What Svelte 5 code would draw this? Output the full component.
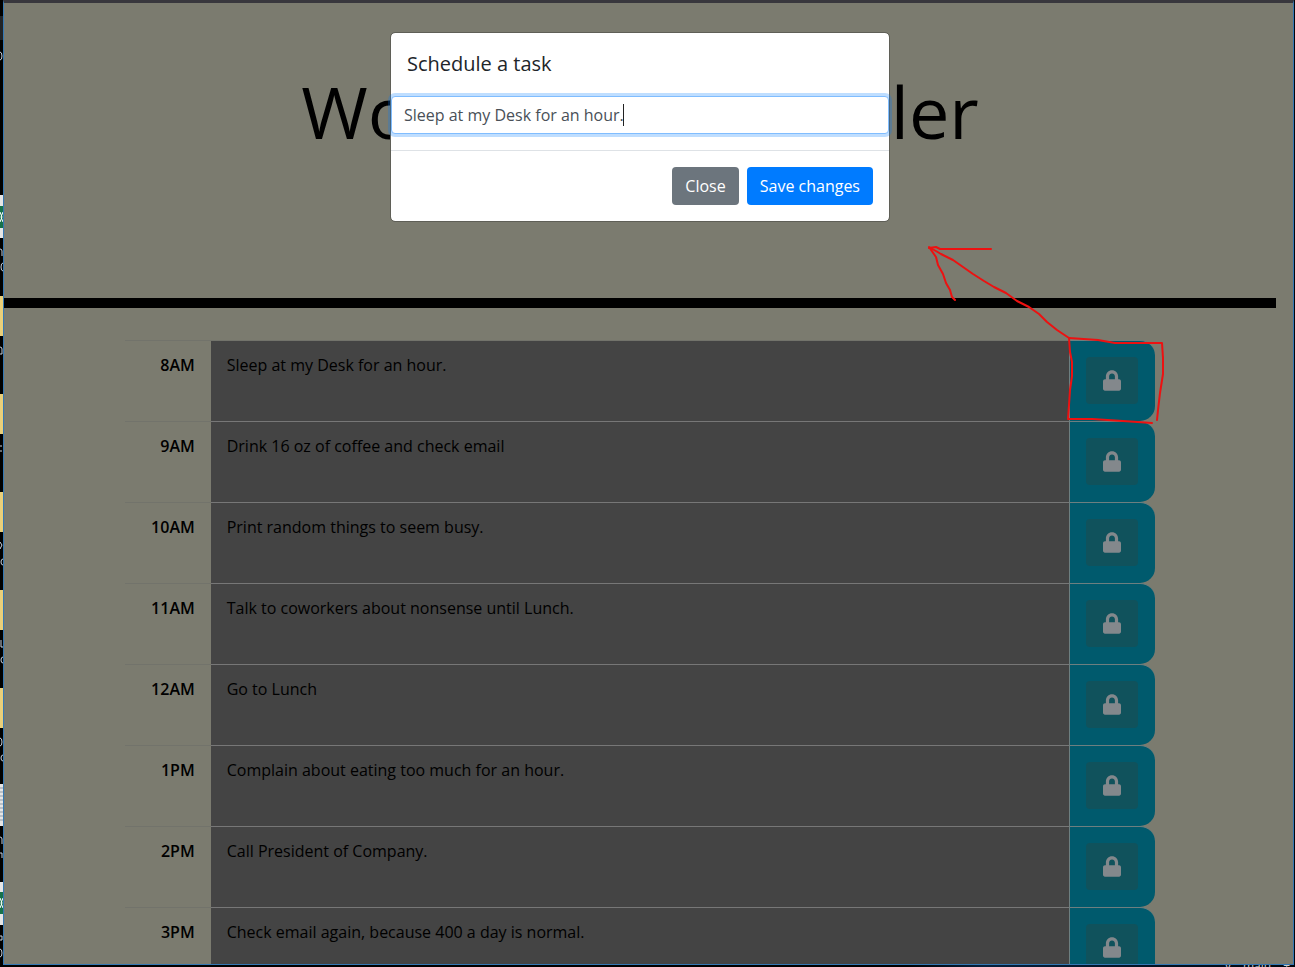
<script>
  const tasks = [
    { hour: '8AM', text: 'Sleep at my Desk for an hour.' },
    { hour: '9AM', text: 'Drink 16 oz of coffee and check email' },
    { hour: '10AM', text: 'Print random things to seem busy.' },
    { hour: '11AM', text: 'Talk to coworkers about nonsense until Lunch.' },
    { hour: '12AM', text: 'Go to Lunch' },
    { hour: '1PM', text: 'Complain about eating too much for an hour.' },
    { hour: '2PM', text: 'Call President of Company.' },
    { hour: '3PM', text: 'Check email again, because 400 a day is normal.' }
  ];

  let draft = $state('Sleep at my Desk for an hour.');
</script>

<div class="desktop">
  <svg class="icons-left" width="3" height="967" aria-hidden="true">
    <rect y="16" width="3" height="24" fill="#222427" />
    <g fill="#e6e6e6">
      <rect y="195" width="3" height="43" />
      <rect y="784" width="3" height="42" />
      <rect y="882" width="3" height="43" />
    </g>
    <g fill="#17724a">
      <rect y="206" width="3" height="22" />
      <rect y="892" width="3" height="22" />
    </g>
    <path d="M0 212l2 5-2 5M3 212l-2 5 2 5M0 898l2 5-2 5M3 898l-2 5 2 5" fill="none" stroke="#fff" />
    <g fill="#e9cf7a">
      <rect y="296" width="3" height="40" />
      <rect y="394" width="3" height="40" />
      <rect y="492" width="3" height="40" />
      <rect y="590" width="3" height="40" />
      <rect y="688" width="3" height="40" />
    </g>
    <path d="M0 788h3M0 792h3M0 796h3M0 800h3M0 804h3M0 808h3M0 812h3M0 816h3M0 820h3" stroke="#8e99a6" />
    <path
      d="M0 52q2 0 2 4t-2 4M0 249q2 0 2 2v5M3 263q-2 0-2 4t2 4M0 347q2 0 2 2v5h-2M0 446h2M0 451h2M0 542l2 3-2 4M3 559q-2 0-2 3t2 3M1 640v7h2M3 657q-2 0-2 3t2 3M0 738q2 0 2 4t-2 4M3 755q-2 0-2 3t2 3M0 837q2 0 2 2v5M0 853h2v5M0 936h2v4h-2M0 949q2 0 2 4t-2 4"
      fill="none" stroke="#c9d3df" />
  </svg>

  <div class="window">
    <main class="page">
      <header class="banner">
        <h1>Work Day Scheduler</h1>
      </header>

      <div class="planner">
        {#each tasks as task}
          <div class="row">
            <div class="hour">{task.hour}</div>
            <div class="task">{task.text}</div>
            <div class="action">
              <button class="lock" aria-label={'Edit ' + task.hour}>
                <svg width="18" height="21" viewBox="0 0 448 512" aria-hidden="true">
                  <path fill="currentColor" d="M400 224h-24v-72C376 68.2 307.8 0 224 0S72 68.2 72 152v72H48c-26.500 0-48 21.500-48 48v192c0 26.500 21.500 48 48 48h352c26.500 0 48-21.500 48-48V272c0-26.500-21.500-48-48-48zm-104 0H152v-72c0-39.700 32.300-72 72-72s72 32.300 72 72v72z" />
                </svg>
              </button>
            </div>
          </div>
        {/each}
      </div>

      <div class="modal" role="dialog" aria-labelledby="modal-title">
        <h2 id="modal-title">Schedule a task</h2>
        <div class="field">
          <input type="text" aria-label="Task" bind:value={draft} />
          <span class="caret"></span>
        </div>
        <footer>
          <button class="btn secondary">Close</button>
          <button class="btn primary">Save changes</button>
        </footer>
      </div>

      <svg class="arrow" width="240" height="184" viewBox="925 242 240 184" aria-hidden="true">
        <g fill="none" stroke="#ed1111" stroke-width="2" stroke-linejoin="round" stroke-linecap="round">
          <path d="M1069 338L1057 330 1047 322 1039 314 1029 307 1017 301 1006 293 994 287 984 281 973 274 963 267 953 260 941 254 929 247 936 257 938 265 943 274 946 283 950 290 952 297 955 300" />
          <path d="M929 248L936 247 940 249H991" />
          <path d="M1069 338L1098 340 1115 343 1162 343 1163 358 1163 374 1160 393 1158 410 1157 420" />
          <path d="M1069 338L1070 352 1072 362 1072 376 1070 390 1069 405 1068 419 1092 419 1123 421 1152 423" />
        </g>
      </svg>
    </main>
  </div>
  <div class="desktop-label" aria-hidden="true"><span>v</span><span>main</span><span>+</span></div>
</div>

<style>
  :global(body) {
    margin: 0;
    overflow: hidden;
    background: #02060d;
  }

  .desktop {
    position: relative;
    box-sizing: border-box;
    height: 100vh;
    padding: 0 1px 2px 3px;
    overflow: hidden;
    background: linear-gradient(90deg, #000 70%, #06203c 76%, #02060d);
    font: 16px/24px 'Open Sans', sans-serif;
    color: #000;
  }

  .icons-left {
    position: absolute;
    left: 0;
    top: 0;
  }

  .desktop-label {
    position: absolute;
    right: 0;
    bottom: 0;
    display: flex;
    gap: 12px;
    width: 70px;
    height: 2px;
    overflow: hidden;
    font-size: 12px;
    line-height: 2px;
    color: #ccc;
  }

  .window {
    box-sizing: border-box;
    height: 100%;
    border: 1px solid #3478b4;
    border-top: 3px solid #38373d;
    overflow: hidden;
    background: #7b7b6f;
  }

  .page {
    position: relative;
    margin-right: 17px;
  }

  .banner {
    box-sizing: border-box;
    height: 305px;
    padding-top: 65px;
    border-bottom: 10px solid #000;
    text-align: center;
  }

  h1 {
    margin: 0;
    font-size: 72px;
    font-weight: 400;
    line-height: 86px;
  }

  .planner {
    width: 81%;
    margin: 32px auto 0;
  }

  .row {
    display: grid;
    grid-template-columns: 1fr 10fr 1fr;
    height: 81px;
  }

  .row > div {
    box-sizing: border-box;
    min-width: 0;
    border-top: 1px solid #72736b;
  }

  .hour {
    padding: 12px 16px;
    text-align: right;
    font-weight: 600;
  }

  .row > .task {
    padding: 12px 16px;
    background: #444;
    border-top-color: #777;
  }

  .row:first-child > .task {
    border-top-color: #72736b;
  }

  .row > .action {
    padding: 16px 17px 16px 16px;
    border-left: 1px solid #6d7f80;
    border-top-color: #6d7f80;
    border-radius: 0 15px 15px 0;
    background: #005a6d;
  }

  .lock {
    display: grid;
    place-items: center;
    width: 100%;
    height: 47px;
    padding: 0;
    border: 0;
    border-radius: 4px;
    background: #10525c;
    color: #83888c;
  }

  .modal {
    position: absolute;
    top: 29px;
    left: 0;
    right: 0;
    box-sizing: border-box;
    width: 500px;
    margin: 0 auto;
    border: 1px solid #5f5f57;
    border-radius: 5px;
    background: #fff;
    background-clip: padding-box;
  }

  h2 {
    margin: 0;
    padding: 16px 16px 17px;
    font-size: 20px;
    font-weight: 400;
    line-height: 30px;
    color: #212529;
  }

  .field {
    position: relative;
    margin-bottom: 16px;
  }

  input {
    display: block;
    box-sizing: border-box;
    width: 100%;
    height: 38px;
    padding: 6px 12px;
    border: 1px solid #80bdff;
    border-radius: 4px;
    outline: 0;
    box-shadow: 0 0 0 3px rgba(0, 123, 255, 0.25);
    background: #fff;
    color: #495057;
    font: inherit;
  }

  .caret {
    position: absolute;
    left: 232px;
    top: 8px;
    width: 1px;
    height: 22px;
    background: #222;
  }

  footer {
    display: flex;
    justify-content: flex-end;
    gap: 8px;
    padding: 16px;
    border-top: 1px solid #dee2e6;
  }

  .btn {
    height: 38px;
    padding: 0 13px;
    border: 0;
    border-radius: 4px;
    font: inherit;
    color: #fff;
  }

  .secondary {
    background: #6c757d;
  }

  .primary {
    background: #007bff;
  }

  .arrow {
    position: absolute;
    top: 239px;
    left: 50%;
    margin-left: 285px;
  }
</style>
